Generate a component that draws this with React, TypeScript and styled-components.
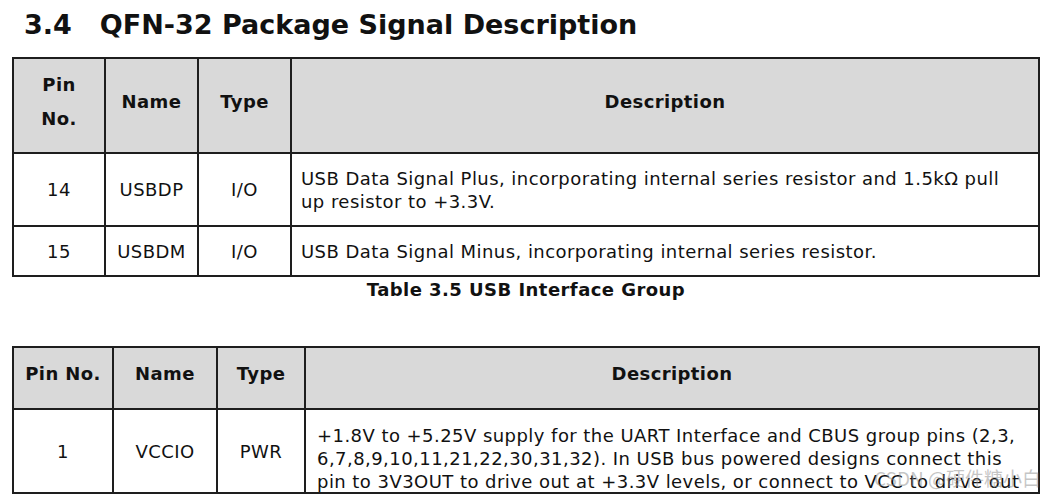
import React from "react";
import styled, { createGlobalStyle } from "styled-components";

const Global = createGlobalStyle`
  html, body { margin: 0; padding: 0; background: #fff; }
  body { font-family: "DejaVu Sans", Verdana, sans-serif; color: #111; }
`;

const Page = styled.div`
  position: relative;
  width: 1055px;
  height: 496px;
  overflow: hidden;
  padding: 0 0 0 12px;
  box-sizing: border-box;
`;

const Title = styled.h2`
  margin: 0;
  padding: 7px 0 0 12px;
  height: 57px;
  box-sizing: border-box;
  font-size: 27px;
  font-weight: bold;
  line-height: 36px;
  color: #111;
`;

const Num = styled.span`
  display: inline-block;
  margin-right: 28px;
`;

const Table = styled.table`
  width: 1028px;
  border-collapse: collapse;
  table-layout: fixed;
  font-size: 18px;
  letter-spacing: 0.45px;
`;

const Th = styled.th<{ $h?: number }>`
  background: #d9d9d9;
  border: 2px solid #1e1e1e;
  font-weight: bold;
  letter-spacing: 0.4px;
  text-align: center;
  vertical-align: middle;
  height: ${(p) => p.$h ?? 54}px;
  line-height: 34px;
  padding: 0 4px 8px;
`;

const Td = styled.td<{ $h?: number; $left?: boolean }>`
  border: 2px solid #1e1e1e;
  text-align: ${(p) => (p.$left ? "left" : "center")};
  vertical-align: middle;
  height: ${(p) => p.$h ?? 40}px;
  line-height: 23px;
  padding: 0 ${(p) => (p.$left ? "12px 0 9px" : "4px")};
`;

const Caption = styled.div`
  width: 1028px;
  text-align: center;
  font-weight: bold;
  font-size: 18px;
  letter-spacing: 0.45px;
  line-height: 24px;
  margin: 1px 0 44px;
`;

const ClipText = styled.div`
  height: 68px;
  padding-top: 14px;
  overflow: hidden;
  line-height: 23px;
  padding-left: 2px;
`;

const Watermark = styled.div`
  position: absolute;
  right: 14px;
  bottom: 6px;
  font-family: "Noto Sans CJK SC", "DejaVu Sans", sans-serif;
  font-size: 19px;
  line-height: 24px;
  color: rgba(140, 140, 140, 0.5);
  pointer-events: none;
`;

export default function App() {
  return (
    <>
      <Global />
      <Page>
        <Title>
          <Num>3.4</Num>QFN-32 Package Signal Description
        </Title>
        <Table>
          <colgroup>
            <col style={{ width: 92 }} />
            <col style={{ width: 93 }} />
            <col style={{ width: 93 }} />
            <col />
          </colgroup>
          <thead>
            <tr>
              <Th $h={85}>
                Pin
                <br />
                No.
              </Th>
              <Th $h={85}>Name</Th>
              <Th $h={85}>Type</Th>
              <Th $h={85}>Description</Th>
            </tr>
          </thead>
          <tbody>
            <tr>
              <Td $h={71}>14</Td>
              <Td $h={71}>USBDP</Td>
              <Td $h={71}>I/O</Td>
              <Td $h={71} $left>
                USB Data Signal Plus, incorporating internal series resistor and 1.5kΩ pull up resistor to +3.3V.
              </Td>
            </tr>
            <tr>
              <Td $h={48}>15</Td>
              <Td $h={48}>USBDM</Td>
              <Td $h={48}>I/O</Td>
              <Td $h={48} $left>
                USB Data Signal Minus, incorporating internal series resistor.
              </Td>
            </tr>
          </tbody>
        </Table>
        <Caption>Table 3.5 USB Interface Group</Caption>
        <Table>
          <colgroup>
            <col style={{ width: 100 }} />
            <col style={{ width: 104 }} />
            <col style={{ width: 88 }} />
            <col />
          </colgroup>
          <thead>
            <tr>
              <Th $h={52}>Pin No.</Th>
              <Th $h={52}>Name</Th>
              <Th $h={52}>Type</Th>
              <Th $h={52}>Description</Th>
            </tr>
          </thead>
          <tbody>
            <tr>
              <Td>1</Td>
              <Td>VCCIO</Td>
              <Td>PWR</Td>
              <Td $left>
                <ClipText>
                  +1.8V to +5.25V supply for the UART Interface and CBUS group pins (2,3, 6,7,8,9,10,11,21,22,30,31,32). In USB bus powered designs connect this pin to 3V3OUT to drive out at +3.3V levels, or connect to VCC to drive out at +5V CMOS level.
                </ClipText>
              </Td>
            </tr>
          </tbody>
        </Table>
        <Watermark>CSDN @硬件糖小白</Watermark>
      </Page>
    </>
  );
}
